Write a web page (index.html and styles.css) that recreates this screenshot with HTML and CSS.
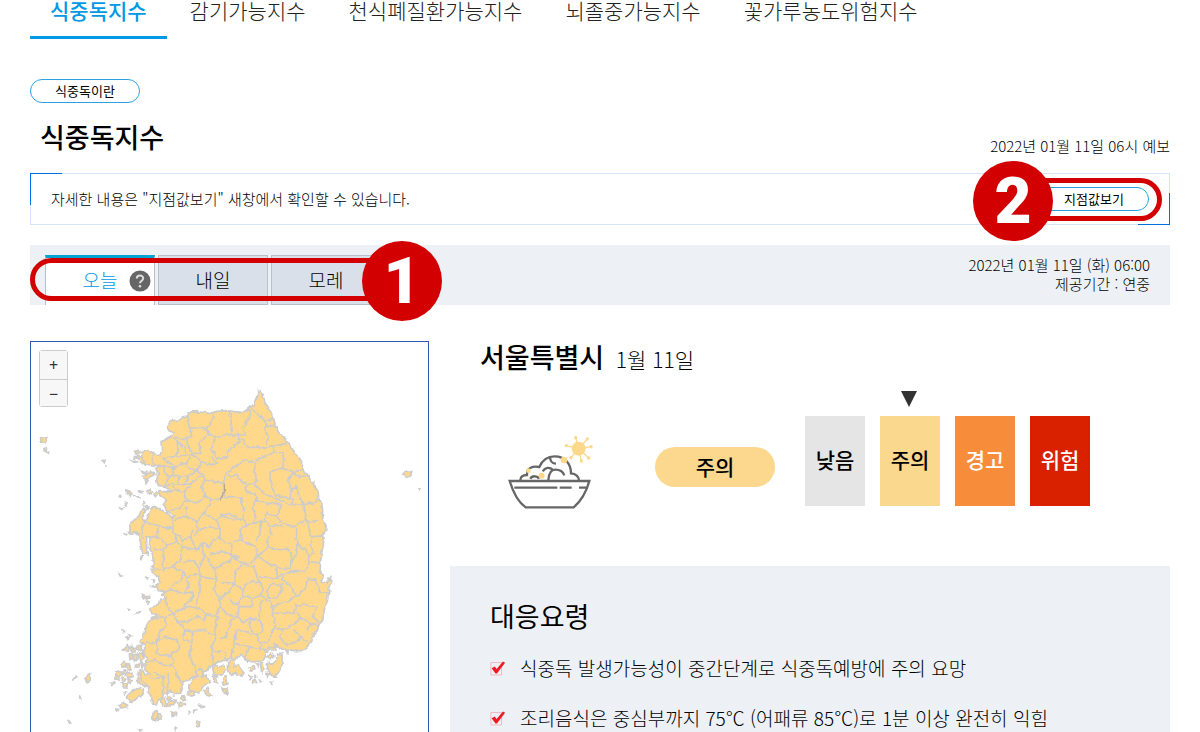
FILE: index.html
```html
<!DOCTYPE html>
<html lang="ko">
<head>
    <meta charset="UTF-8">
    <meta name="viewport" content="width=device-width, initial-scale=1.0">
    <title>식중독지수</title>
    <link rel="stylesheet" href="styles.css">
</head>
<body>
    <div class="container">
        <nav class="index-nav">
            <a href="#food" class="active">식중독지수</a>
            <a href="#cold">감기가능지수</a>
            <a href="#asthma">천식폐질환가능지수</a>
            <a href="#stroke">뇌졸중가능지수</a>
            <a href="#pollen">꽃가루농도위험지수</a>
        </nav>

        <button type="button" class="pill-button">식중독이란</button>

        <div class="title-row">
            <h1>식중독지수</h1>
            <p class="announce">2022년 01월 11일 06시 예보</p>
        </div>

        <div class="notice">
            <p>자세한 내용은 "지점값보기" 새창에서 확인할 수 있습니다.</p>
            <button type="button" class="pill-button">지점값보기</button>
            <div class="mark-frame frame-two"></div>
            <div class="mark-number number-two">2</div>
        </div>

        <div class="day-bar">
            <div class="tabs">
                <button type="button" class="tab active">오늘
                    <svg class="help" viewBox="0 0 22 22" width="22" height="22">
                        <circle cx="11" cy="11" r="10.5" fill="#666"/>
                        <path d="M7.8 8.6C7.8 4.6 14.2 4.7 14.2 8.4C14.2 10.7 11 10.8 11 13.2" fill="none" stroke="#ddd" stroke-width="2"/>
                        <circle cx="11" cy="16.2" r="1.3" fill="#ddd"/>
                    </svg>
                </button>
                <button type="button" class="tab">내일</button>
                <button type="button" class="tab">모레</button>
            </div>
            <p class="period">2022년 01월 11일 (화) 06:00<br>제공기간 : 연중</p>
            <div class="mark-frame frame-one"></div>
            <div class="mark-number number-one">1</div>
        </div>

        <div class="content">
            <div class="map">
                <div class="zoom-buttons">
                    <button type="button">+</button>
                    <button type="button">−</button>
                </div>
                <svg class="korea" viewBox="3 6 1191 1200">
                    <defs>
                        <filter id="coast" x="-5%" y="-5%" width="110%" height="110%">
                            <feTurbulence type="fractalNoise" baseFrequency="0.06" numOctaves="2" seed="4"/>
                            <feDisplacementMap in="SourceGraphic" scale="14" xChannelSelector="R" yChannelSelector="G"/>
                        </filter>
                    </defs>
                    <g filter="url(#coast)">
                    <!-- mainland -->
                    <path class="land" d="M687 151L697 163L707 190L720 210L731 238L738 262L755 287L775 310L795 338L812 360L820 385L835 408L850 430L865 460L866 475L875 490L878 510L877 530L887 560L887 575L878 585L881 610L875 640L872 665L870 700L880 708L873 722L888 730L900 713L906 725L897 750L892 785L882 815L878 842L865 855L863 870L850 885L845 905L832 920L815 932L795 932L775 930L773 945L768 930L750 922L735 912L738 930L720 930L705 935L706 950L695 962L670 966L650 963L642 948L630 942L628 953L612 955L590 960L570 965L555 970L545 978L525 990L500 1005L480 1018L460 1025L455 1040L448 1060L430 1065L420 1050L410 1065L400 1060L398 1075L385 1080L380 1095L368 1092L365 1070L358 1058L355 1040L335 1030L325 1015L325 995L338 990L345 1005L358 1000L345 990L345 970L355 955L340 945L345 920L330 905L345 880L350 855L365 832L385 825L365 820L358 810L385 792L390 777L410 778L398 765L405 758L385 755L382 742L368 740L390 730L385 710L365 695L370 670L368 645L358 620L360 592L350 590L350 630L352 645L338 640L332 610L325 580L300 580L300 560L305 545L325 532L332 515L345 505L345 520L335 530L345 545L355 530L360 505L370 500L395 510L412 520L425 535L432 530L410 510L400 490L410 482L393 470L390 455L410 455L420 448L400 440L385 440L380 420L385 400L380 380L345 375L337 355L338 335L355 328L370 340L390 345L395 335L393 305L410 298L425 290L430 275L415 270L410 260L425 242L445 240L470 230L475 217L500 215L540 220L560 214L590 212L640 218L655 208L675 190L683 170L683 153Z"/>
                    <!-- northern districts -->
                    <path class="border" d="M470 232L480 265L505 262L530 265L545 245L555 220M480 265L485 290L470 295L430 295M598 214L604 240L603 265L608 285M530 265L535 285L555 290L575 285L608 285L645 285L642 260L655 235L660 206M470 295L475 320L490 345L510 340L510 310L530 285M440 300L445 330L435 350L395 355M435 350L470 345L490 345M555 290L545 325L560 355L590 350L600 325L630 305L625 285M490 345L515 365L500 390L480 390L470 375L480 350M515 365L545 375L560 370L545 350M370 345L370 375M380 380L400 375L430 385L440 375L470 370M395 355L430 375M445 310L462 320L468 340M400 375L405 400L420 410L405 430L400 440M420 410L450 410L475 410L500 390M430 385L425 408M450 410L442 428M475 410L460 435M500 390L520 405L525 420L580 430L590 400L630 370M400 440L430 430L460 435L485 430L500 415L520 405M430 430L435 450L460 455L475 445L485 430M410 455L440 450M460 455L470 480L450 505L430 510L415 510M470 480L500 490L525 470L515 440L525 420M525 470L545 475L570 480L583 455L580 430M470 500L470 530L440 535L425 545L430 570L440 605M470 530L500 545L520 520L540 490L545 475M500 545L505 570L540 560L570 565L560 540L540 530L520 520M560 540L580 525L600 520L625 535M345 545L385 560L425 565M345 545L335 570L340 600M385 560L380 580L390 600M505 570L490 590"/>
                    <path class="border" d="M625 290L640 300L655 325L670 325L685 318L705 325L730 318L770 310M665 200L685 225L705 240L730 240M705 240L708 262L705 275L715 290L710 315M708 262L735 252M730 318L730 335L760 340L760 375L755 385M730 335L700 350L675 365M630 370L650 360L675 370L675 400L680 425L645 440L650 460M595 395L585 415L580 450L585 475M595 410L615 402L635 425L650 430M755 385L720 395L720 420L725 440L735 465L780 475L785 445L775 425L790 395L755 385M790 395L800 410L832 408M790 395L815 392L820 385M785 445L800 440L805 465L820 490L785 495L790 475M650 460L675 460L680 480L670 500L675 530L665 550M585 475L600 470L630 475L640 500L640 540L610 540L570 525M680 480L705 490L745 490L755 500L740 530L755 550L790 560L830 540L820 510L820 490M820 490L850 490L866 478M830 540L842 545L865 540M800 565L800 640L785 665M675 430L690 450L720 470L760 485L785 495M740 530L710 520L705 545L720 555L755 560M640 540L650 555L690 545L705 545M690 545L690 580L675 600M830 540L840 570L845 590L880 588"/>
                    <!-- southern districts -->
                    <path class="border" d="M570 565L570 600L605 612L605 650L640 672L670 665L685 645L675 620L635 600L610 605M635 600L630 570L650 555M685 650L715 620L750 630L775 625L785 650L780 685L750 685L715 670L685 650M720 555L725 580L710 600L715 620M800 610L835 640L840 665L872 670M845 590L840 615L850 635L838 650M840 665L825 695L785 695L760 705L755 720L780 735L800 770L825 745L835 715L855 720L870 755L897 760M640 672L620 690L610 730L570 725M625 650L605 655L570 680M640 672L670 680L680 705L690 730L670 720L645 735L640 765L665 775L695 765L700 745L690 730M690 710L740 715L755 700M742 715L740 685M715 770L710 750L730 730L755 735L750 760L735 775L715 770M570 780L600 750L610 730L640 750M600 780L625 795L630 775L640 765M625 795L620 830L640 845L660 835L690 840M665 775L665 800L630 800M690 765L720 785L730 800L770 785L800 770M725 800L730 820L790 820L800 795L820 795L860 800M730 820L735 860L760 870L790 855L815 835L800 815M690 840L690 800L700 780M690 840L700 865L680 885L690 910L715 905L725 880L735 860M660 835L655 860L680 885M620 830L600 850L585 890L570 900M620 870L650 875L680 885M760 870L750 890L770 915L800 905L815 890L790 870M815 835L845 850L865 855M815 890L830 905M830 870L845 850M860 800L850 830L865 850M690 910L695 930L735 920M620 870L615 900L600 960M655 920L645 950M615 910L655 920L690 925"/>
                    <path class="border" d="M360 595L385 590L410 615L400 630L370 625M410 615L440 605L460 620L450 660L430 680L400 690L370 690M430 575L460 600L480 590L490 570M400 690L400 640L400 630M430 680L460 695L455 720L430 730L425 750L390 755M460 620L500 630L515 610L540 620L550 600L570 590M480 590L500 630M455 670L490 660L505 680L510 700L470 710L460 695M515 610L520 650L510 680M520 640L540 670L555 690L560 720L515 710L510 700M540 640L580 635L625 650M555 690L580 670L605 665M425 750L460 760L490 755L485 780L460 800M470 710L475 740L460 760M510 700L510 760L495 800L470 800M560 720L550 750L565 770L605 755M405 780L410 800L430 820L470 800M430 820L405 830L365 835M430 820L440 845L465 870L460 900L485 910M405 830L405 860L385 885L380 905L345 910M495 800L530 820L520 840L500 830L470 845M530 820L565 830L555 860L560 890M565 770L570 800L560 830M570 800L590 820L620 830M485 910L490 870L520 870L560 890L545 920L550 970M485 910L480 950L500 1000M550 930L585 940L590 960M380 905L400 890L440 900L450 925L425 940L430 980L455 1030M380 905L380 940L425 950M430 980L400 975L375 960L350 970M375 1000L400 1010L400 1060M415 1000L412 1060M460 870L490 875M355 1012L385 1015L400 1010M440 845L470 845"/>
                    <path class="border-dark" d="M583 432L584 455L571 482"/>
                    <!-- west sea islands -->
                    <path class="land" d="M31 295L51 293L49 303L40 307L33 303ZM42 325L50 324L48 334L42 332ZM52 340L59 340L57 343ZM217 362L225 361L223 368ZM223 376L226 377L225 378ZM313 334L325 331L333 337L327 343L315 342ZM313 350L324 349L326 354L315 355ZM325 351L334 350L342 366L338 371L327 361ZM304 361L312 362L324 369L310 366ZM331 389L342 394L353 394L348 400L334 395ZM338 407L352 403L362 395L376 403L361 410L350 418L340 414ZM346 422L352 425L348 431ZM352 452L360 449L364 456L356 462L350 457ZM370 460L378 452L385 460L376 470ZM289 450L295 452L303 462L301 467L292 462ZM324 452L337 455L331 458ZM308 465L315 468L332 475L320 472ZM286 487L291 489L288 495ZM272 504L278 506L274 509ZM268 470L272 470L270 473ZM342 486L346 489L343 491ZM345 498L354 501L350 504ZM284 582L292 583L287 585ZM296 574L316 576L312 584L300 582ZM333 646L340 650L335 657ZM268 702L275 705L270 707ZM349 712L353 713L351 716ZM368 721L373 723L370 725ZM338 764L345 770L358 769L354 777L342 775ZM351 785L356 788L353 790ZM294 808L298 809L296 811ZM318 822L325 812L332 814L326 822ZM277 868L284 873L280 877ZM297 884L303 886L299 890ZM290 892L296 894L293 898Z"/>
                    <!-- south west islands -->
                    <path class="land" d="M280 930L292 917L298 924L295 934ZM297 922L306 916L312 923L304 928ZM303 932L318 924L316 935L307 938ZM321 918L333 915L334 930L324 935ZM298 942L306 938L308 956L300 959ZM309 946L320 942L321 957L313 963ZM325 946L336 940L339 957L330 965ZM337 930L345 937L341 946ZM273 975L283 964L293 970L285 980L276 981ZM289 978L298 972L301 986L292 991ZM316 973L325 969L326 980L318 982ZM333 966L342 970L335 981ZM257 998L268 993L276 1002L264 1012L257 1006ZM280 991L286 992L284 1004L278 1001ZM289 1000L305 997L306 1010L294 1013ZM255 1012L266 1010L267 1022L258 1020ZM277 1012L287 1014L283 1024L277 1022ZM294 1018L306 1019L303 1030L297 1028ZM277 1030L293 1028L290 1044L281 1043ZM242 1029L252 1029L248 1034ZM164 1013L182 1002L180 1018L170 1027ZM129 1016L137 1009L136 1015ZM148 1066L155 1080L150 1076ZM113 1140L124 1149L119 1150ZM325 1168L335 1172L328 1173ZM266 1095L280 1087L290 1100L278 1104ZM280 1058L288 1058L284 1064ZM258 1107L268 1108L263 1113ZM297 1062L310 1052L327 1042L340 1046L339 1063L320 1078L302 1085L291 1075Z"/>
                    <path class="land" d="M322 1005L332 998L334 1018L347 1030L356 1037L340 1037L324 1027ZM390 1080L403 1077L410 1094L396 1098ZM411 1070L424 1072L421 1082L411 1079ZM411 1088L425 1085L437 1089L430 1097L412 1098ZM430 1077L441 1078L437 1085ZM443 1091L457 1084L465 1094L449 1100ZM456 1066L462 1064L466 1080L456 1076ZM365 1123L380 1109L385 1124L377 1139L366 1136ZM382 1127L394 1122L394 1137L386 1138ZM426 1116L438 1117L435 1127L426 1126ZM475 1112L480 1116L476 1119ZM490 1110L497 1110L493 1117ZM434 1164L441 1165L437 1169ZM500 1147L509 1146L508 1156L500 1158ZM510 1099L523 1099L515 1103ZM470 1060L480 1054L494 1057L490 1068L473 1068ZM476 1040L487 1020L501 1008L500 994L513 986L521 996L513 1010L529 1005L538 1026L519 1038L512 1053L496 1060L478 1050ZM521 1050L533 1044L545 1066L535 1069ZM548 983L555 973L562 981L585 975L588 991L572 1005L553 1008ZM550 1013L559 1012L563 1028L553 1025ZM580 1012L588 1010L594 1032L580 1036L577 1025ZM574 1045L589 1047L593 1068L584 1056ZM596 965L610 960L613 980L624 975L639 995L637 1008L621 1006L616 998L602 1004L595 990ZM657 981L668 977L675 986L664 990ZM658 1009L666 1013L660 1016ZM668 1022L675 1018L680 1028L668 1030ZM689 1024L692 1025L690 1026ZM725 1027L728 1027L727 1029ZM690 965L700 970L702 990L695 997ZM711 990L718 967L726 973L737 964L743 944L756 942L756 978L749 991L740 996L737 1010L727 1006L721 996ZM708 1000L719 1001L710 1011ZM710 950L724 941L731 949L719 958ZM678 972L685 970L684 980ZM676 1010L679 1012L677 1013Z"/>
                    <!-- Ulleungdo, Dokdo -->
                    <path class="land" d="M1120 397L1133 392L1142 395L1139 406L1130 411L1121 406ZM1168 444L1170 445L1169 447Z"/>
                    </g>
                </svg>
            </div>

            <div class="detail">
                <h2 class="city">서울특별시 <span>1월 11일</span></h2>
                <div class="status">
                    <svg class="bowl" viewBox="0 0 360 285" width="120" height="95">
                        <g fill="none" stroke="#666" stroke-width="7">
                            <path d="M59 168H298C289 201 271 230 251 247H107C84 231 69 201 59 168Z"/>
                            <path d="M73 188H202M209 188H245M267 188H290"/>
                            <path d="M91 166C91 155 99 150 111 150V146C111 129 128 122 148 126C156 107 173 94 194 94C225 94 243 117 243 145C257 146 267 155 267 166"/>
                            <path d="M180 96C180 108 187 116 198 116M121 161C126 151 143 152 147 161M158 139C166 127 178 125 188 134M175 166C176 148 180 134 196 134C210 134 219 140 223 151"/>
                        </g>
                        <g fill="#fcd88b">
                            <circle cx="266" cy="71" r="21"/>
                            <path d="M266 71L257 38M266 71L292 42M266 71L303 65M266 71L296 99M266 71L274 108M266 71L243 98M266 71L228 62" stroke="#fcd88b" stroke-width="4"/>
                            <circle cx="257" cy="38" r="5"/><circle cx="292" cy="42" r="5"/>
                            <circle cx="303" cy="65" r="5"/><circle cx="296" cy="99" r="5"/>
                            <circle cx="274" cy="108" r="5"/><circle cx="243" cy="98" r="5"/>
                            <circle cx="229" cy="62" r="5"/><circle cx="222" cy="105" r="10"/>
                            <circle cx="115" cy="137" r="7"/><circle cx="155" cy="152" r="9"/>
                        </g>
                    </svg>
                    <strong class="current">주의</strong>
                    <ul class="levels">
                        <li class="low">낮음</li>
                        <li class="caution">주의</li>
                        <li class="warning">경고</li>
                        <li class="danger">위험</li>
                    </ul>
                </div>
                <div class="advice">
                    <h2>대응요령</h2>
                    <ul>
                        <li>
                            <svg class="check" viewBox="0 0 42 45" width="14" height="15"><path d="M1 7H31V42H1Z" fill="none" stroke="#f5a3aa" stroke-width="2"/><path d="M3 23L12 18L17 25L35 4L41 8L18 38L14 38Z" fill="#ed1c24"/></svg>
                            식중독 발생가능성이 중간단계로 식중독예방에 주의 요망
                        </li>
                        <li>
                            <svg class="check" viewBox="0 0 42 45" width="14" height="15"><path d="M1 7H31V42H1Z" fill="none" stroke="#f5a3aa" stroke-width="2"/><path d="M3 23L12 18L17 25L35 4L41 8L18 38L14 38Z" fill="#ed1c24"/></svg>
                            조리음식은 중심부까지 75℃ (어패류 85℃)로 1분 이상 완전히 익힘
                        </li>
                    </ul>
                </div>
            </div>
        </div>
    </div>
</body>
</html>
```
FILE: styles.css
```css
* {
    box-sizing: border-box;
}
body {
    margin: 0;
    font-family: "Noto Sans CJK KR", sans-serif;
    font-weight: 300;
    color: #000;
    background-color: #fff;
}
h1, h2, p, ul {
    margin: 0;
    padding: 0;
}
ul {
    list-style: none;
}
button {
    font-family: inherit;
    font-weight: inherit;
    color: inherit;
    cursor: pointer;
}
.container {
    height: 100vh;
    padding: 0 30px;
    overflow: hidden;
}
.index-nav {
    display: flex;
    gap: 3px;
    margin-bottom: 40px;
}
.index-nav a {
    padding: 0 20px 16px;
    border-bottom: 3px solid transparent;
    font-size: 21px;
    line-height: 20px;
    color: #222;
    text-decoration: none;
}
.index-nav a.active {
    border-color: #0099e5;
    color: #0099e5;
    font-weight: 500;
}
.pill-button {
    display: block;
    width: 110px;
    height: 24px;
    padding: 0;
    border: 1px solid #2d9fe3;
    border-radius: 12px;
    background-color: #fff;
    font-size: 13px;
    font-weight: 400;
    line-height: 20px;
}
.title-row {
    display: flex;
    justify-content: space-between;
    align-items: flex-end;
    height: 70px;
    padding: 0 0 16px 10px;
}
h1, h2 {
    font-size: 27px;
    line-height: 40px;
    font-weight: 400;
}
.title-row h1 {
    font-weight: 500;
}
.announce {
    font-size: 15px;
    line-height: 22px;
}
.notice {
    position: relative;
    display: flex;
    justify-content: space-between;
    align-items: center;
    height: 52px;
    margin-bottom: 20px;
    padding: 0 20px;
    border: 1px solid #d7e3fb;
    font-size: 15px;
}
.notice p {
    padding-bottom: 2px;
}
.notice::before,
.notice::after {
    content: "";
    position: absolute;
    width: 31px;
    height: 31px;
}
.notice::before {
    top: -1px;
    left: -1px;
    border-top: 1px solid #0070e0;
    border-left: 1px solid #0070e0;
}
.notice::after {
    right: -1px;
    bottom: -1px;
    border-right: 1px solid #0070e0;
    border-bottom: 1px solid #0070e0;
}
.mark-frame {
    position: absolute;
    height: 43px;
    border: 5px solid #d20000;
    border-radius: 22px;
}
.mark-number {
    position: absolute;
    width: 80px;
    height: 80px;
    border-radius: 50%;
    background-color: #d20000;
    color: #fff;
    font: 900 64px/82px Roboto, sans-serif;
    text-align: center;
}
.frame-two {
    top: 4px;
    right: 7px;
    width: 160px;
}
.number-two {
    top: -13px;
    right: 116px;
}
.day-bar {
    position: relative;
    display: flex;
    justify-content: space-between;
    height: 60px;
    margin-bottom: 36px;
    padding: 10px 20px 0 15px;
    background-color: #edf1f6;
}
.tabs {
    display: flex;
    gap: 3px;
}
.tab {
    position: relative;
    width: 110px;
    padding: 0 0 2px;
    border: 1px solid #b8c0cb;
    background-color: #dae0e9;
    font-size: 19px;
}
.tab.active {
    padding-bottom: 4px;
    border-top: 3px solid #00a3d3;
    border-bottom: 0;
    background-color: #fff;
    color: #0099e5;
}
.help {
    position: absolute;
    top: 12px;
    right: 3px;
}
.period {
    font-size: 15px;
    line-height: 19px;
    text-align: right;
}
.frame-one {
    top: 13px;
    left: 0;
    width: 370px;
}
.number-one {
    top: -4px;
    left: 332px;
}
.content {
    display: grid;
    grid-template-columns: 35% 1fr;
    gap: 21px;
}
.map {
    position: relative;
    height: 500px;
    border: 1px solid #2a5db0;
}
.korea {
    display: block;
    width: 100%;
}
.land {
    fill: #ffd88c;
    stroke: #ccc;
    stroke-width: 5;
}
.border {
    fill: none;
    stroke: #ccc;
    stroke-width: 5;
}
.border-dark {
    fill: none;
    stroke: #b8a67c;
    stroke-width: 3;
}
.zoom-buttons {
    position: absolute;
    top: 8px;
    left: 8px;
    width: 29px;
    border: 1px solid #ccc;
    border-radius: 3px;
}
.zoom-buttons button {
    display: block;
    width: 100%;
    height: 28px;
    padding: 0;
    border: 0;
    background-color: #f7f7f7;
    color: #333;
    font: 16px/28px "Noto Sans", sans-serif;
}
.zoom-buttons button + button {
    height: 27px;
    border-top: 1px solid #ccc;
}
.city {
    padding-left: 30px;
    line-height: 32px;
    font-weight: 500;
}
.city span {
    margin-left: 4px;
    font-size: 21px;
    font-weight: 300;
    line-height: 20px;
}
.status {
    display: flex;
    align-items: center;
    height: 193px;
    padding: 0 80px 6px 40px;
}
.bowl {
    margin-top: 12px;
}
.current {
    width: 120px;
    margin: 0 30px 0 45px;
    padding-bottom: 2px;
    border-radius: 20px;
    background-color: #fbd88d;
    font-size: 21px;
    line-height: 38px;
    font-weight: 500;
    text-align: center;
}
.levels {
    display: flex;
    gap: 15px;
    margin-top: -12px;
}
.levels li {
    position: relative;
    width: 60px;
    padding-bottom: 4px;
    font-size: 21px;
    line-height: 86px;
    font-weight: 500;
    text-align: center;
}
.low {
    background-color: #e5e5e5;
}
.caution {
    background-color: #fad88e;
}
.caution::before {
    content: "";
    position: absolute;
    top: -25px;
    left: 21px;
    border: 8px solid transparent;
    border-top: 16px solid #333;
    border-bottom: 0;
}
.warning {
    background-color: #f78d3b;
    color: #fff;
}
.danger {
    background-color: #d92100;
    color: #fff;
}
.advice {
    height: 275px;
    padding: 30px 40px;
    background-color: #edf1f6;
}
.advice ul {
    margin-top: 16px;
}
.advice li {
    display: flex;
    align-items: center;
    gap: 14px;
    margin-bottom: 18px;
    font-size: 19px;
    line-height: 32px;
    white-space: nowrap;
}
.check {
    width: 16px;
    height: 16px;
}
```
